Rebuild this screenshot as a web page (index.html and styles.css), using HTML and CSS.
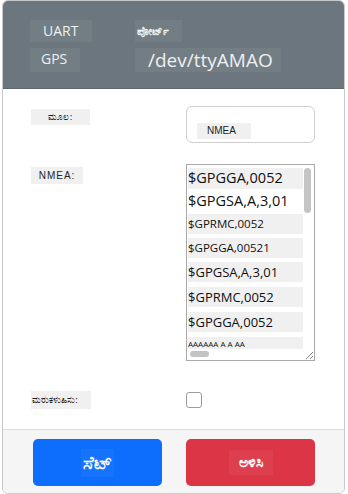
FILE: index.html
```html
<!DOCTYPE html>
<html lang="kn">
<head>
  <meta charset="UTF-8">
  <meta name="viewport" content="width=device-width, initial-scale=1.0">
  <title>GPS UART</title>
  <link rel="stylesheet" href="styles.css">
</head>
<body>

  <div class="card">
    <div class="card-header">
      <div class="header-grid">
        <span class="tag tag-uart">UART</span>
        <span class="tag tag-port">ಪೋರ್ಟ್</span>
        <span class="tag tag-gps">GPS</span>
        <span class="tag tag-dev">/dev/ttyAMAO</span>
      </div>
    </div>

    <div class="card-body">
      <div class="form-row">
        <span class="label">ಮೂಲ:</span>
        <div class="select-box"><span class="chip">NMEA</span></div>
      </div>

      <div class="form-row">
        <span class="label label-nmea">NMEA:</span>
        <div class="nmea-box">
          <div class="nmea-lines">
            <div class="line big shaded">$GPGGA,0052</div>
            <div class="line big">$GPGSA,A,3,01</div>
            <div class="line small shaded">$GPRMC,0052</div>
            <div class="line small shaded">$GPGGA,00521</div>
            <div class="line mid shaded">$GPGSA,A,3,01</div>
            <div class="line mid shaded">$GPRMC,0052</div>
            <div class="line mid shaded">$GPGGA,0052</div>
            <div class="line tiny shaded">AAAAAA A A AA</div>
          </div>
          <div class="vbar"><span class="thumb thumb-v"></span></div>
          <div class="hbar"><span class="thumb thumb-h"></span></div>
          <div class="grip">
            <svg width="11" height="11" viewBox="0 0 11 11">
              <path d="M10 3 L3 10 M10 7 L7 10" stroke="#8a8a8a" stroke-width="1" fill="none"/>
            </svg>
          </div>
        </div>
      </div>

      <div class="form-row form-row-check">
        <span class="label label-resend">ಮರುಕಳುಹಿಸು:</span>
        <span class="checkbox"></span>
      </div>
    </div>

    <div class="card-footer">
      <button class="btn btn-set"><span>ಸೆಟ್</span></button>
      <button class="btn btn-clear"><span>ಅಳಿಸಿ</span></button>
    </div>
  </div>

</body>
</html>
```

FILE: styles.css
```css
body {
  font-family: 'Open Sans', 'Noto Sans', sans-serif;
  background-color: #ffffff;
  margin: 0;
  padding: 0;
}

.card {
  margin: 0 3px 2px 2px;
  border: 1px solid #c8c8c8;
  border-radius: 6px;
  overflow: hidden;
  background-color: white;
}

/* header */
.card-header {
  background-color: #6c767e;
  height: 88px;
  padding: 19px 0 0 27px;
  box-sizing: border-box;
  border-bottom: 1px solid #5e676e;
}

.header-grid {
  display: grid;
  grid-template-columns: 105px auto;
  row-gap: 6px;
  align-items: start;
}

.tag {
  display: inline-block;
  justify-self: start;
  color: #eef0f1;
  background-color: rgba(255, 255, 255, 0.05);
  font-size: 14px;
  line-height: 22px;
  height: 22px;
}

.tag-uart {
  padding: 0 14px 0 13px;
}

.tag-gps {
  padding: 0 13px 0 11px;
  height: 24px;
}

.tag-port {
  font-size: 11px;
  font-weight: bold;
  padding: 0 13px 0 2px;
}

.tag-dev {
  font-size: 19px;
  line-height: 24px;
  height: 24px;
  padding: 0 8px 0 13px;
}

/* body */
.card-body {
  padding: 17px 29px 20px 28px;
}

.form-row {
  display: grid;
  grid-template-columns: 155px 129px;
  align-items: start;
  margin-bottom: 21px;
}

.label {
  justify-self: start;
  display: inline-block;
  background-color: #f0f0f0;
  color: #222;
  font-family: 'DejaVu Sans', sans-serif;
  font-size: 9px;
  line-height: 16px;
  width: 59px;
  text-align: center;
  margin-top: 3px;
}

.label-nmea {
  width: 52px;
  font-family: 'Liberation Sans', sans-serif;
  font-size: 10px;
  letter-spacing: 1px;
  line-height: 17px;
  margin-top: 3px;
}

.label-resend {
  width: 59px;
  text-align: left;
  padding-left: 1px;
  line-height: 18px;
  margin-top: 0;
}

.select-box {
  height: 37px;
  border: 1px solid #cfcfcf;
  border-radius: 6px;
  box-sizing: border-box;
  padding: 10px 0 0 10px;
}

.chip {
  display: inline-block;
  background-color: #f0f0f0;
  font-family: 'Liberation Sans', sans-serif;
  font-size: 10px;
  line-height: 16px;
  padding: 0 15px 0 10px;
  color: #222;
}

/* NMEA list with its scrollbars */
.nmea-box {
  height: 197px;
  border: 1px solid #a9a9a9;
  box-sizing: border-box;
  display: grid;
  grid-template-columns: 1fr 11px;
  grid-template-rows: 1fr 11px;
  color: #111;
}

.nmea-lines {
  overflow: hidden;
  padding: 3px 0 0 1px;
}

.vbar {
  padding: 3px 2px 0 1px;
}

.hbar {
  padding: 2px 0 0 3px;
}

.thumb {
  display: block;
  background-color: #c4c4c4;
  border-radius: 4px;
}

.thumb-v {
  width: 7px;
  height: 45px;
}

.thumb-h {
  width: 19px;
  height: 6px;
}

.grip svg {
  display: block;
}

.line {
  white-space: nowrap;
  height: 20px;
  line-height: 20px;
  margin-bottom: 4px;
}

.shaded {
  background-color: #f0f0f0;
}

.big {
  font-size: 14.5px;
  margin-bottom: 2px;
  height: 21px;
}

.small {
  font-size: 11.5px;
}

.mid {
  font-size: 13px;
  margin-bottom: 5px;
}

.tiny {
  font-size: 8px;
  height: 12px;
  line-height: 14px;
}

.form-row-check {
  align-items: start;
  margin-top: 30px;
  margin-bottom: 0;
}

.checkbox {
  display: block;
  width: 14px;
  height: 14px;
  border: 1px solid #9a9a9a;
  border-radius: 3px;
  margin-top: 1px;
}

/* footer */
.card-footer {
  background-color: #f5f5f5;
  border-top: 1px solid #dcdcdc;
  display: grid;
  grid-template-columns: 129px 129px;
  column-gap: 24px;
  padding: 9px 29px 7px 30px;
}

.btn {
  height: 47px;
  border: none;
  border-radius: 5px;
  color: white;
  font-family: 'DejaVu Sans', sans-serif;
  cursor: pointer;
}

.btn span {
  display: inline-block;
  padding: 3px 2px;
}

.btn-set {
  background-color: #0d6efd;
  font-size: 18px;
  font-weight: bold;
}

.btn-set span {
  background-color: rgba(255, 255, 255, 0.04);
}

.btn-clear {
  background-color: #dc3545;
  font-size: 14px;
  font-weight: bold;
}

.btn-clear span {
  background-color: rgba(255, 255, 255, 0.05);
  padding: 4px 10px;
}
```
